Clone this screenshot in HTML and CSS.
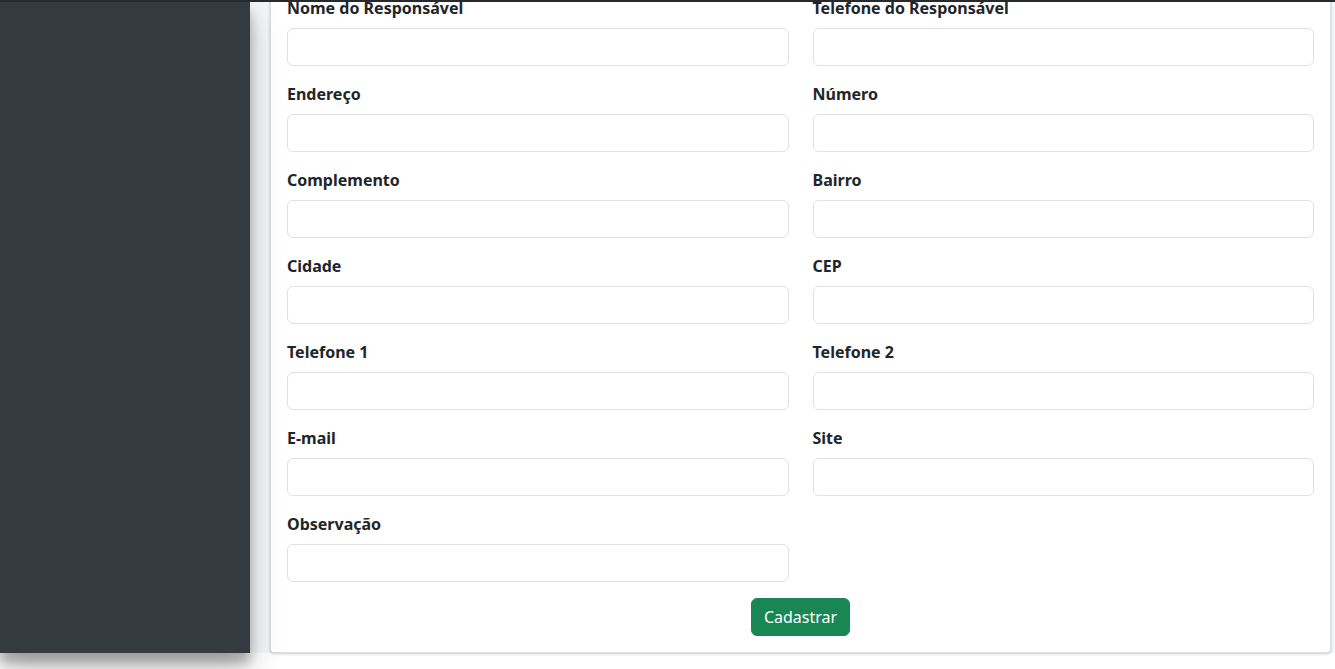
FILE: index.html
```html
<!DOCTYPE html>
<html lang="pt-BR">
<head>
<meta charset="utf-8">
<title>Cadastro</title>
<link rel="stylesheet" href="styles.css">
</head>
<body>
<div class="topline"></div>
<div class="layout">
  <aside class="sidebar"></aside>
  <main class="content">
    <div class="card">
      <form class="card-body">
        <div class="grid">
          <div class="group"><label class="label">Nome do Responsável</label><input class="input" type="text"></div>
          <div class="group"><label class="label">Telefone do Responsável</label><input class="input" type="text"></div>
          <div class="group"><label class="label">Endereço</label><input class="input" type="text"></div>
          <div class="group"><label class="label">Número</label><input class="input" type="text"></div>
          <div class="group"><label class="label">Complemento</label><input class="input" type="text"></div>
          <div class="group"><label class="label">Bairro</label><input class="input" type="text"></div>
          <div class="group"><label class="label">Cidade</label><input class="input" type="text"></div>
          <div class="group"><label class="label">CEP</label><input class="input" type="text"></div>
          <div class="group"><label class="label">Telefone 1</label><input class="input" type="text"></div>
          <div class="group"><label class="label">Telefone 2</label><input class="input" type="text"></div>
          <div class="group"><label class="label">E-mail</label><input class="input" type="text"></div>
          <div class="group"><label class="label">Site</label><input class="input" type="text"></div>
          <div class="group"><label class="label">Observação</label><input class="input" type="text"></div>
        </div>
        <div class="actions"><button class="btn" type="button">Cadastrar</button></div>
      </form>
    </div>
  </main>
</div>
</body>
</html>
```

FILE: styles.css
```css
* { box-sizing: border-box; }
html, body { margin: 0; padding: 0; }
html { background: #ffffff; }
body {
  min-height: 669px;
  background: #ffffff;
  font-family: "Noto Sans", "Open Sans", sans-serif;
  color: #212529;
  font-size: 16px;
  line-height: 1.5;
  overflow: hidden;
}
.topline {
  height: 2px;
  background: #26292d;
  position: relative;
  z-index: 3;
}
.layout {
  display: flex;
  align-items: stretch;
}
.sidebar {
  width: 250px;
  flex: 0 0 250px;
  background: #343a40;
  position: relative;
  z-index: 2;
  box-shadow: 0 14px 28px rgba(0,0,0,.25), 0 10px 10px rgba(0,0,0,.22);
}
.content {
  flex: 1;
  background: #f4f6f9;
  padding: 0 4px 0 20px;
}
.card {
  margin-top: -23px;
  background: #fff;
  border: 1px solid rgba(0,0,0,.125);
  border-radius: 4px;
  box-shadow: 0 0 1px rgba(0,0,0,.125), 0 1px 3px rgba(0,0,0,.2);
}
.card-body {
  padding: 16px;
  margin: 0;
}
.grid {
  display: grid;
  grid-template-columns: 1fr 1fr;
  column-gap: 24px;
}
.group {
  margin-bottom: 16px;
}
.label {
  display: block;
  font-weight: 700;
  margin-bottom: 8px;
  line-height: 24px;
}
.input {
  display: block;
  width: 100%;
  height: 38px;
  border: 1px solid #dee2e6;
  border-radius: 6px;
  background: #fff;
  font: inherit;
  padding: 6px 12px;
}
.actions {
  display: flex;
  justify-content: center;
}
.btn {
  font-family: inherit;
  font-size: 16px;
  line-height: 24px;
  padding: 6px 12px;
  color: #fff;
  background: #198754;
  border: 1px solid #198754;
  border-radius: 6px;
}
```
